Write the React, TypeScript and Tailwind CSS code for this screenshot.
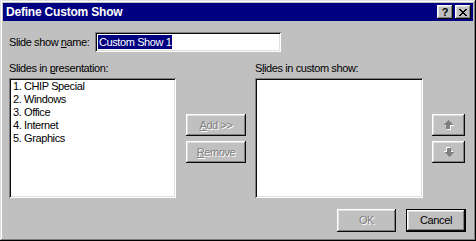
import React from "react";

const btn =
  "shadow-[inset_-1px_-1px_#0a0a0a,inset_1px_1px_#fff,inset_-2px_-2px_#808080,inset_2px_2px_#dfdfdf] bg-[#c0c0c0] flex items-center justify-center";
const sunken =
  "shadow-[inset_1px_1px_#808080,inset_-1px_-1px_#fff,inset_2px_2px_#0a0a0a,inset_-2px_-2px_#dfdfdf] bg-white";
const disabled = "text-[#808080] [text-shadow:1px_1px_0_#fff]";

function Arrow({ down }: { down?: boolean }) {
  const pts = "5,0 10,5 7,5 7,9 3,9 3,5 0,5";
  return (
    <svg width="11" height="10" viewBox="0 0 11 10" shapeRendering="crispEdges" className={`block ${down ? "rotate-180" : ""}`}>
      <polygon points={pts} transform="translate(1,1)" fill="#fff" />
      <polygon points={pts} fill="#808080" />
    </svg>
  );
}

export default function App() {
  return (
    <div className="w-[476px] h-[241px] bg-[#c0c0c0] p-[3px] flex flex-col shadow-[inset_-1px_-1px_#000,inset_1px_1px_#dfdfdf,inset_-2px_-2px_#808080,inset_2px_2px_#fff] text-[11px] tracking-[-0.4px] text-black font-['Liberation_Sans',Arial,sans-serif]">
      {/* Title bar */}
      <div className="h-[18px] bg-[#000080] flex items-center justify-between pl-[3px] pr-[2px]">
        <span className="text-white font-bold text-[12px] tracking-[-0.2px] leading-[18px]">Define Custom Show</span>
        <div className="flex gap-[2px]">
          <div className={`${btn} w-[16px] h-[14px] text-[11px] font-bold leading-none tracking-normal`}>?</div>
          <div className={`${btn} w-[16px] h-[14px]`}>
            <svg width="8" height="7" viewBox="0 0 8 7" shapeRendering="crispEdges">
              <path d="M0 0h2v1h-2zM6 0h2v1h-2zM1 1h2v1h-2zM5 1h2v1h-2zM2 2h4v1h-4zM3 3h2v1h-2zM2 4h4v1h-4zM1 5h2v1h-2zM5 5h2v1h-2zM0 6h2v1h-2zM6 6h2v1h-2z" fill="#000" />
            </svg>
          </div>
        </div>
      </div>

      {/* Body */}
      <div className="flex-1 flex flex-col pl-[6px] pr-[7px]">
        <div className="mt-[11px] flex items-center h-[20px]">
          <span className="w-[86px] leading-[13px]">
            Slide show <u>n</u>ame:
          </span>
          <div className={`${sunken} w-[186px] h-[20px] flex items-center pl-[3px]`}>
            <span className="bg-[#000080] text-white leading-[14px] px-[1px]">Custom Show 1</span>
          </div>
        </div>

        <div className="mt-[10px] flex">
          <div className="w-[167px] flex flex-col">
            <span className="h-[13px] leading-[13px]">
              Slides in <u>p</u>resentation:
            </span>
            <div className={`${sunken} mt-[3px] h-[120px] pt-[2px] pl-[4px] flex flex-col`}>
              {["1. CHIP Special", "2. Windows", "3. Office", "4. Internet", "5. Graphics"].map((s) => (
                <span key={s} className="leading-[13px] h-[13px]">
                  {s}
                </span>
              ))}
            </div>
          </div>

          <div className="ml-[10px] w-[60px] pt-[52px] flex flex-col gap-[5px]">
            <div className={`${btn} h-[22px] ${disabled}`}>
              <span>
                <u>A</u>dd &gt;&gt;
              </span>
            </div>
            <div className={`${btn} h-[22px] ${disabled}`}>
              <span>
                <u>R</u>emove
              </span>
            </div>
          </div>

          <div className="ml-[9px] w-[168px] flex flex-col">
            <span className="h-[13px] leading-[13px]">
              S<u>l</u>ides in custom show:
            </span>
            <div className={`${sunken} mt-[3px] h-[120px]`} />
          </div>

          <div className="ml-[9px] w-[33px] pt-[52px] flex flex-col gap-[5px]">
            <div className={`${btn} h-[22px]`}>
              <Arrow />
            </div>
            <div className={`${btn} h-[22px]`}>
              <Arrow down />
            </div>
          </div>
        </div>

        <div className="mt-[11px] flex justify-end gap-[10px]">
          <div className={`${btn} w-[59px] h-[23px] ${disabled}`}>OK</div>
          <div className={`${btn} w-[60px] h-[23px] border border-black`}>Cancel</div>
        </div>
      </div>
    </div>
  );
}
